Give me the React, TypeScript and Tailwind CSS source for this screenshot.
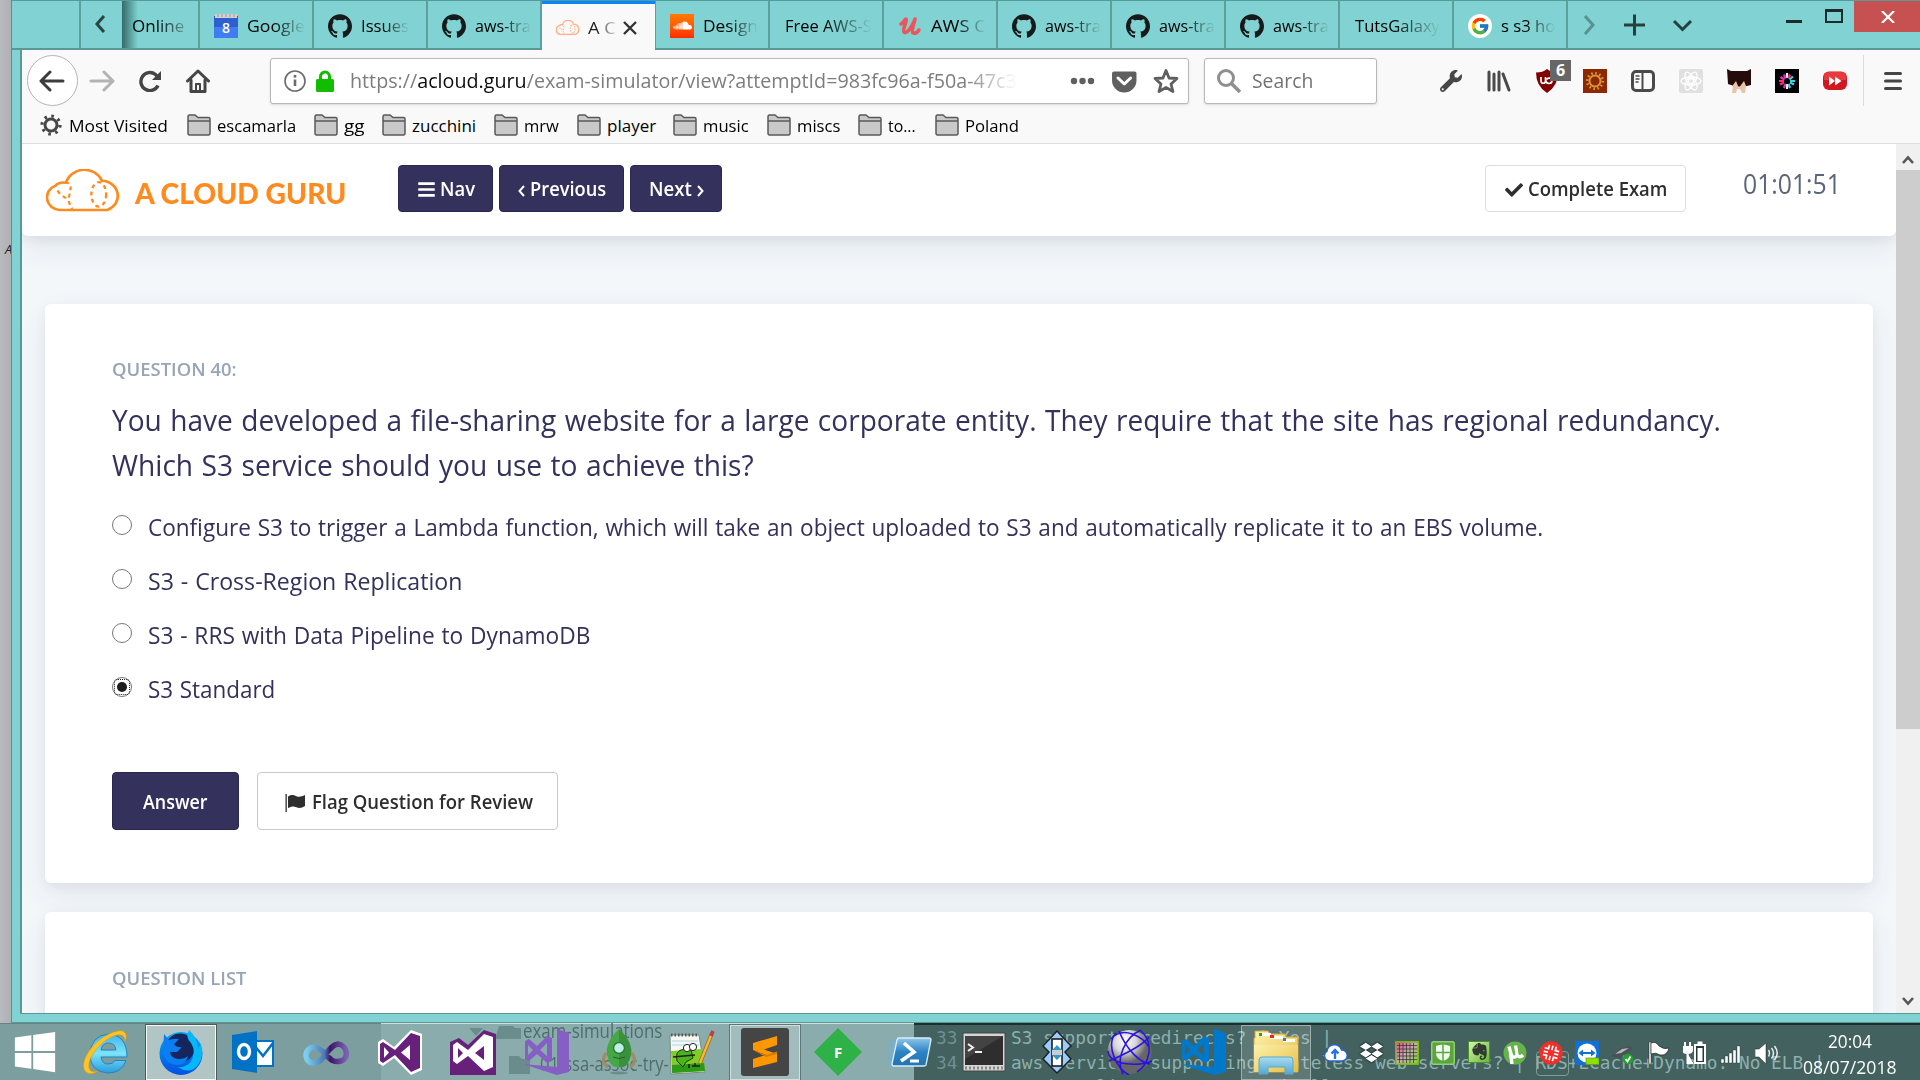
import React, { useLayoutEffect, useRef, useState } from "react";
import { FaBars, FaCheck, FaSoundcloud, FaWindows, FaDropbox, FaWrench } from "react-icons/fa";
import { SiGithub, SiEvernote } from "react-icons/si";
import { FcGoogle } from "react-icons/fc";

type P = { children?: React.ReactNode; className?: string };

/* Single line of text condensed or widened to an exact width. */
function Fit({ w, children, className = "" }: P & { w: number }) {
  const ref = useRef<HTMLSpanElement>(null);
  const [s, setS] = useState(1);
  useLayoutEffect(() => {
    if (ref.current) setS(w / ref.current.offsetWidth);
  }, [w]);
  return (
    <span className={`inline-block shrink-0 whitespace-nowrap ${className}`} style={{ width: w }}>
      <span ref={ref} className="inline-block origin-left" style={{ transform: `scaleX(${s})` }}>
        {children}
      </span>
    </span>
  );
}

function Cloud({ className = "", sw = 2.6 }: { className?: string; sw?: number }) {
  return (
    <svg viewBox="2 0 72 44" preserveAspectRatio="none" className={className} fill="none" stroke="currentColor" strokeWidth={sw}>
      <path d="M15 42 A13 13 0 0 1 11 17 Q14 13 21 14 A18 18 0 0 1 55 12 A15.5 15.5 0 0 1 60 42 Z" />
      <g strokeWidth={sw * 0.85} strokeDasharray="4 3.5">
        <path d="M20 13 C28 16 25 20 24 27 C23 32 24 37 27 41" />
        <path d="M13 22 C17 30 21 27 22 33" />
        <ellipse cx="52" cy="26" rx="7" ry="12.5" />
      </g>
    </svg>
  );
}

const Github = () => <SiGithub className="h-6 w-6 shrink-0 text-[#161a1a]" />;
const Calendar = () => (
  <svg viewBox="0 0 24 24" className="h-6 w-6 shrink-0">
    <rect x="0" y="2" width="24" height="22" fill="#2d5fd0" />
    <path d="M0 13H24V24H0Z" fill="#3f7df0" />
    <rect x="1" y="0" width="22" height="4" fill="#d5d2cd" />
    <path d="M4 0v3M8 0v3M12 0v3M16 0v3M20 0v3" stroke="#999" strokeWidth="1" />
    <text x="12" y="19" textAnchor="middle" fontSize="14" fill="#fff" fontFamily="Open Sans, sans-serif" fontWeight="600">8</text>
  </svg>
);
const Sound = () => (
  <span className="flex h-6 w-6 shrink-0 items-center justify-center bg-gradient-to-b from-[#ff7a00] to-[#ff2a00]">
    <FaSoundcloud className="h-[19px] w-[19px] text-white" />
  </span>
);
const Udemy = () => (
  <svg viewBox="0 0 24 24" className="h-6 w-6 shrink-0" fill="none" stroke="#e9575d" strokeWidth="3.6" strokeLinecap="round" strokeLinejoin="round">
    <path d="M3 10 C6 8 7 5 8 5 C10 6 4 15 6 18 C9 21 15 11 17 5 C16 10 13 17 15 19 C17 20 20 18 21 16" />
  </svg>
);
const Goog = () => (
  <span className="flex h-6 w-6 shrink-0 items-center justify-center rounded-full bg-white">
    <FcGoogle className="h-5 w-5" />
  </span>
);

const fade = "[mask-image:linear-gradient(to_right,#000_45%,transparent)]";

function Tab({ icon, text, tw }: { icon?: React.ReactNode; text: string; tw: number }) {
  return (
    <div className="flex h-full w-[114px] shrink-0 items-center border-r-2 border-r-[#5da19f] pt-0.5 pl-[14px] text-black">
      {icon}
      <Fit w={tw} className={`${icon ? "ml-[9px]" : "ml-px"} ${fade}`}>{text}</Fit>
    </div>
  );
}

function TabStrip() {
  return (
    <div className="flex h-[50px] w-full shrink-0 border-t border-b-2 border-t-[#549b9a] border-b-[#5a9896] bg-[#80d3d2] text-[17px] leading-6">
      <div className="h-full w-[69px] shrink-0 border-r-2 border-[#5da19f]" />
      <div className="flex h-full w-[41px] shrink-0 items-center justify-center">
        <svg viewBox="0 0 12 18" className="mr-1 mb-0.5 h-[18px] w-3" fill="none" stroke="#274544" strokeWidth="3"><path d="M10 1 3 9l7 8" /></svg>
      </div>
      <div className="flex h-full w-[78px] shrink-0 items-center border-r-2 border-[#5da19f] bg-gradient-to-r from-[#346b6a] to-[#80d3d2] to-[16px] pt-0.5 pl-[10px] text-black">
        <Fit w={52} className="[mask-image:linear-gradient(to_right,#000_45%,#00000040)]">Online</Fit>
      </div>
      <Tab icon={<Calendar />} text="Google" tw={58} />
      <Tab icon={<Github />} text="Issues" tw={48} />
      <Tab icon={<Github />} text="aws-tra" tw={56} />
      <div className="-mb-0.5 flex h-[50px] w-[113px] shrink-0 items-center border-t-[3px] border-[#0a84ff] bg-[#f9f9fa] pl-[14px]">
        <Cloud className="h-[15px] w-6 text-[#ffb184]" sw={4} />
        <Fit w={28} className="ml-2 text-[#222] [mask-image:linear-gradient(to_right,#000_30%,#00000020)]">A C</Fit>
        <svg viewBox="0 0 14 14" className="ml-[7px] h-[14px] w-[14px]" stroke="#333" strokeWidth="2.4"><path d="M1 1 13 13M13 1 1 13" /></svg>
      </div>
      <div className="h-full w-px shrink-0 bg-[#5da19f]" />
      <Tab icon={<Sound />} text="Design" tw={55} />
      <Tab text="Free AWS-S" tw={87} />
      <Tab icon={<Udemy />} text="AWS C" tw={55} />
      <Tab icon={<Github />} text="aws-tra" tw={56} />
      <Tab icon={<Github />} text="aws-tra" tw={56} />
      <Tab icon={<Github />} text="aws-tra" tw={56} />
      <Tab text="TutsGalaxy" tw={85} />
      <Tab icon={<Goog />} text="s s3 ho" tw={54} />
      <div className="flex h-full flex-1 items-start">
        <svg viewBox="0 0 120 46" className="mt-px ml-[14px] h-[46px] w-[120px]" fill="none" stroke="#24403f" strokeWidth="3">
          <path d="M3 14 11 23 3 32" stroke="#58918f" />
          <path d="M42 23H63M52.500 12.500V33.500" />
          <path d="M92 19 100.500 27.500 109 19" />
        </svg>
        <div className="mt-[19px] ml-[84px] h-[3px] w-4 bg-[#1c2b2b]" />
        <div className="mt-2 ml-[23px] h-[14px] w-[18px] border-2 border-t-[3px] border-[#1c2b2b]" />
        <div className="ml-auto flex h-[31px] w-[66px] items-center justify-center bg-[#c75050] pl-0.5">
          <svg viewBox="0 0 14 12" className="h-3 w-[14px]" stroke="#fff" strokeWidth="2.2"><path d="M1 0 13 12M13 0 1 12" /></svg>
        </div>
      </div>
    </div>
  );
}

function Slot({ children, className = "" }: P) {
  return <div className={`flex w-12 shrink-0 items-center justify-center ${className}`}>{children}</div>;
}

function Toolbar() {
  return (
    <div className="flex h-[61px] w-full shrink-0 items-center pl-[5px]">
      <div className="flex h-[51px] w-[51px] items-center justify-center rounded-full border border-[#b4b4b5] bg-white">
        <svg viewBox="0 0 26 22" className="mr-0.5 h-[22px] w-[26px]" fill="none" stroke="#3c3c3d" strokeWidth="3" strokeLinecap="round" strokeLinejoin="round"><path d="M24 11H2M11 2 2 11l9 9" /></svg>
      </div>
      <Slot><svg viewBox="0 0 26 22" className="h-[22px] w-[26px]" fill="none" stroke="#b3b3b4" strokeWidth="3" strokeLinecap="round" strokeLinejoin="round"><path d="M2 11H24M15 2l9 9-9 9" /></svg></Slot>
      <Slot><svg viewBox="0 0 24 22" className="h-[22px] w-6" fill="none" stroke="#454546" strokeWidth="3.4"><path d="M20 15.500A9 9 0 1 1 17.500 4.500L20 7" /><path d="M23 1V10H14Z" fill="#454546" stroke="none" /></svg></Slot>
      <Slot><svg viewBox="0 0 24 24" className="h-6 w-6" fill="none" stroke="#454546" strokeWidth="3" strokeLinecap="round" strokeLinejoin="round"><path d="M1.500 12 12 2 22.500 12" /><path d="M5 11V22.500H19V11" /><path d="M10 22v-7h4v7" strokeWidth="2" /></svg></Slot>
      <div className="ml-12 flex h-[46px] w-[919px] shrink-0 items-center rounded-[3px] border border-[#b8b8b9] bg-white pl-[13px] text-[20px] shadow-sm">
        <svg viewBox="0 0 22 22" className="h-[22px] w-[22px]" fill="none" stroke="#6b6b6c" strokeWidth="1.600"><circle cx="11" cy="11" r="10" /><path d="M11 9.500V16" strokeWidth="2.600" /><path d="M11 5V7.600" strokeWidth="2.600" /></svg>
        <svg viewBox="0 0 18 22" className="ml-[10px] h-[22px] w-[18px]" fill="#12bc00"><rect y="9" width="18" height="13" rx="1.500" /><path d="M4.500 10V6.500a4.500 4.500 0 0 1 9 0V10" fill="none" stroke="#12bc00" strokeWidth="3" /></svg>
        <Fit w={667} className="ml-4 text-[#7d7d7e] [mask-image:linear-gradient(to_right,#000_92%,transparent)]">
          https://<span className="text-[#0c0c0d]">acloud.guru</span>/exam-simulator/view?attemptId=983fc96a-f50a-47c3
        </Fit>
        <svg viewBox="0 0 110 28" className="ml-[53px] h-7 w-[110px] overflow-visible" fill="#5f5f60">
          <circle cx="4" cy="14" r="3.200" /><circle cx="12.500" cy="14" r="3.200" /><circle cx="21" cy="14" r="3.200" />
          <path d="M43 3.500H65Q67 3.500 67 5.500V12.500A13 12 0 0 1 41 12.500V5.500Q41 3.500 43 3.500Z" transform="translate(3.500 1) scale(.94 1)" />
          <path d="M48 11 54.300 17 60.600 11" fill="none" stroke="#fff" strokeWidth="3" strokeLinecap="round" strokeLinejoin="round" />
          <path d="M96 3.500 99 11 107 11.500 101 17 103 24.500 96 20.500 89 24.500 91 17 85 11.500 93 11Z" fill="none" stroke="#5f5f60" strokeWidth="2.800" strokeLinejoin="round" />
        </svg>
      </div>
      <div className="ml-[15px] flex h-[46px] w-[173px] shrink-0 items-center rounded-[3px] border border-[#b8b8b9] bg-white pl-3 text-[20px] text-[#737374] shadow-sm">
        <svg viewBox="0 0 24 24" className="h-6 w-6" fill="none" stroke="#8f8f90" strokeWidth="3"><circle cx="9" cy="9" r="7.500" /><path d="M14.500 14.500 23 23" strokeWidth="3.600" /></svg>
        <Fit w={61} className="ml-[11px]">Search</Fit>
      </div>
      <div className="ml-[50px] flex items-center">
        <Slot><FaWrench className="h-[22px] w-[22px] text-[#474748]" /></Slot>
        <Slot><svg viewBox="0 0 24 22" className="h-[22px] w-6" stroke="#4a4a4b" strokeWidth="3" strokeLinecap="round"><path d="M2 2V20M7 4V20M12 2V20M16 4 22 20" /></svg></Slot>
        <Slot className="relative">
          <svg viewBox="0 0 22 24" className="h-6 w-[22px]"><path d="M11 0Q15 3.500 22 3.500 22 17 11 24 0 17 0 3.500 7 3.500 11 0Z" fill="#800000" /><path d="M5 8v4a2.200 2.200 0 0 0 4.500 0V8M10 11.500a3 3 0 1 0 6 0 3 3 0 0 0-5.500-1" fill="none" stroke="#fff" strokeWidth="1.700" /></svg>
          <span className="absolute top-[-9px] left-[27px] flex h-[21px] w-[21px] items-center justify-center bg-[#666] text-[16px] font-bold text-white">6</span>
        </Slot>
        <Slot><svg viewBox="0 0 24 24" className="h-6 w-6"><rect width="24" height="24" fill="#8e2800" /><circle cx="12" cy="12" r="5.500" fill="none" stroke="#d6973a" strokeWidth="2" /><circle cx="12" cy="12" r="7.800" fill="none" stroke="#d6973a" strokeWidth="2.600" strokeDasharray="1.600 2.484" /></svg></Slot>
        <Slot><svg viewBox="0 0 24 22" className="h-[22px] w-6" fill="none" stroke="#4a4a4b" strokeWidth="3"><rect x="1.500" y="1.500" width="21" height="19" rx="3.500" /><path d="M11.500 1V21" strokeWidth="2" /><path d="M4.500 6h4M4.500 9h4M4.500 12h3" strokeWidth="1.500" /></svg></Slot>
        <Slot><svg viewBox="0 0 24 24" className="h-6 w-6" fill="none" stroke="#fff" strokeWidth="1.300"><rect width="24" height="24" rx="2" fill="#e0e0e0" stroke="none" /><ellipse cx="12" cy="12" rx="10" ry="4" /><ellipse cx="12" cy="12" rx="10" ry="4" transform="rotate(60 12 12)" /><ellipse cx="12" cy="12" rx="10" ry="4" transform="rotate(120 12 12)" /><circle cx="12" cy="12" r="2.500" /></svg></Slot>
        <Slot><svg viewBox="0 0 24 24" className="h-6 w-6"><path d="M0 0 4 2H20L24 0V16Q12 20 1 15Z" fill="#250b0a" /><path d="M5 24 6 16 9 12 11 17 12 19 14 16 17 12 19 17 18 24H15L13 20H10L9 24Z" fill="#e9c4a8" /></svg></Slot>
        <Slot><svg viewBox="0 0 24 24" className="h-6 w-6" strokeWidth="2.200"><rect width="24" height="24" /><path d="M12 4v5M12 15v5" stroke="#fff" /><path d="M15 5.500 13.500 9.500M4 12h5M5 15.500 9 13.500" stroke="#ff2d7d" /><path d="M18 7.500 14.500 10.500M15 12h5M19 15.500 15 13.500M15 19 13.500 15" stroke="#39d8e8" /><path d="M9 5.500 10.500 9.500M5.500 8 9.500 10.500M9 19 10.500 15" stroke="#e034c0" /></svg></Slot>
        <Slot><svg viewBox="0 0 24 20" className="h-5 w-6"><rect y=".5" width="24" height="18.500" rx="6" fill="#cf1820" /><path d="M1 9V6Q1 1 6 1H18Q23 1 23 6V9Z" fill="#e63a3c" /><path d="M6 5.500 12 10 6 14.500ZM12 5.500 18.500 10 12 14.500Z" fill="#fff" /></svg></Slot>
      </div>
      <div className="ml-1 h-[51px] w-px bg-[#dcdcdd]" />
      <svg viewBox="0 0 18 18" className="ml-5 h-[18px] w-[18px]" stroke="#454546" strokeWidth="3" strokeLinecap="round"><path d="M1.500 1.500h15M1.500 9h15M1.500 16.500h15" /></svg>
    </div>
  );
}

const bookmarks: [string, number, number][] = [
  ["escamarla", 79, 18], ["gg", 20, 18], ["zucchini", 64, 18], ["mrw", 35, 18], ["player", 49, 17],
  ["music", 46, 18], ["miscs", 43, 18], ["to...", 28, 19], ["Poland", 54, 0],
];

function Bookmarks() {
  return (
    <div className="flex h-[33px] w-full shrink-0 items-start border-b border-[#dededf] pl-[18px] text-[17px] leading-[30px] text-black">
      <svg viewBox="0 0 22 22" className="mt-[3px] h-[22px] w-[22px]" fill="none" stroke="#474748"><circle cx="11" cy="11" r="6" strokeWidth="3" /><circle cx="11" cy="11" r="9" strokeWidth="3.200" strokeDasharray="2.600 4.470" /></svg>
      <Fit w={99} className="mr-[19px] ml-[7px]">Most Visited</Fit>
      {bookmarks.map(([name, w, gap]) => (
        <div key={name} className="flex" style={{ marginRight: gap }}>
          <svg viewBox="0 0 24 22" className="mt-[3px] h-[22px] w-6" fill="#c9c9ca" stroke="#59595a" strokeWidth="1.500"><path d="M1 19V2.500Q1 1 2.500 1H8L11 3.500H21.500Q23 3.500 23 5V19Q23 21 21.500 21H2.500Q1 21 1 19Z" /><path d="M1 7H23" /></svg>
          <Fit w={w} className="ml-1.5">{name}</Fit>
        </div>
      ))}
    </div>
  );
}

const navBtn = "flex h-[47px] shrink-0 items-center justify-center rounded-[4px] border border-[#29274f] bg-[#34315c] pt-0.5 font-semibold text-white";

function ExamHeader() {
  return (
    <div className="relative z-10 flex h-[92px] w-full shrink-0 items-start rounded-b-md bg-white pt-[21px] pl-6 text-[19px] shadow-[0_12px_30px_rgba(50,60,93,0.08),0_4px_12px_rgba(0,0,0,0.06)]">
      <Cloud className="mt-1 h-[43px] w-[76px] text-[#ff8a1e]" />
      <Fit w={211} className="mt-2 ml-[13px] font-[Lato] text-[28px] leading-10 font-black text-[#ff8a1e]">A CLOUD GURU</Fit>
      <div className={`${navBtn} ml-[52px] w-[95px] gap-1`}><FaBars className="h-[19px] w-[19px]" /><Fit w={35}>Nav</Fit></div>
      <div className={`${navBtn} ml-1.5 w-[125px] gap-[5px]`}>
        <svg viewBox="0 0 7 12" className="mt-0.5 h-3 w-[7px]" fill="none" stroke="#fff" strokeWidth="2"><path d="M6 1 1.500 6 6 11" /></svg>
        <Fit w={76}>Previous</Fit>
      </div>
      <div className={`${navBtn} ml-1.5 w-[92px] gap-[5px]`}>
        <Fit w={43}>Next</Fit>
        <svg viewBox="0 0 7 12" className="mt-0.5 h-3 w-[7px]" fill="none" stroke="#fff" strokeWidth="2"><path d="M1 1 5.500 6 1 11" /></svg>
      </div>
      <div className="ml-[763px] flex h-[47px] w-[201px] items-center justify-center gap-[5px] rounded-[4px] border border-[#dedee0] pt-0.5 pl-px font-semibold text-[#2e2e2e]">
        <FaCheck className="h-[18px] w-[18px]" /><Fit w={139}>Complete Exam</Fit>
      </div>
      <Fit w={98} className="-mt-px ml-[57px] text-[27px] leading-10 text-[#5b6579]">01:01:51</Fit>
    </div>
  );
}

const options: [string, number][] = [
  ["Configure S3 to trigger a Lambda function, which will take an object uploaded to S3 and automatically replicate it to an EBS volume.", 1395],
  ["S3 - Cross-Region Replication", 314],
  ["S3 - RRS with Data Pipeline to DynamoDB", 442],
  ["S3 Standard", 127],
];
const cardShadow = "shadow-[0_12px_30px_rgba(50,60,93,0.08),0_4px_12px_rgba(0,0,0,0.05)]";

function Exam() {
  return (
    <div className="flex min-h-0 flex-1 flex-col overflow-hidden bg-[#f3f7fa] text-[#34315c]">
      <ExamHeader />
      <div className={`mt-[68px] ml-[23px] flex h-[579px] w-[1828px] shrink-0 flex-col rounded-md bg-white pt-[52px] pl-[67px] ${cardShadow}`}>
        <Fit w={125} className="h-[27px] text-[18px] leading-[27px] font-semibold text-[#98a5b5]">QUESTION 40:</Fit>
        <div className="mt-[14px] flex flex-col text-[30px] leading-[45px] [word-spacing:0.04em]">
          <Fit w={1609}>You have developed a file-sharing website for a large corporate entity. They require that the site has regional redundancy.</Fit>
          <Fit w={642}>Which S3 service should you use to achieve this?</Fit>
        </div>
        <div className="mt-[13px] flex flex-col text-[24px] [word-spacing:0.04em]">
          {options.map(([t, w], i) => (
            <div key={t} className="flex h-[54px] items-center">
              <span className="mb-1 flex h-5 w-5 items-center justify-center rounded-full border border-[#77777a] bg-white">
                {i === 3 && <span className="flex h-4 w-4 items-center justify-center rounded-[4px] border border-dotted border-[#222]"><span className="h-2.5 w-2.5 rounded-full bg-[#1d1d1d]" /></span>}
              </span>
              <Fit w={w} className="ml-4">{t}</Fit>
            </div>
          ))}
        </div>
        <div className="mt-[56px] flex text-[19px] font-semibold">
          <div className="flex h-[58px] w-[127px] items-center justify-center rounded-[4px] border border-[#29274f] bg-[#34315c] pt-[3px] text-white"><Fit w={65}>Answer</Fit></div>
          <div className="ml-[18px] flex h-[58px] w-[301px] items-center rounded-[4px] border border-[#c9c9cc] pt-[3px] pl-[27px] text-[#2e2e2e]">
            <svg viewBox="0 0 20 18" className="h-[18px] w-5" fill="#2e2e2e"><path d="M.500 0H1.800V18H.500Z" /><path d="M3 2.500C7 0 9 1 11.500 2.200 14 3.400 17 2.500 20 1V12C17 14 14 14.500 11.500 13.200 9 12 6.500 12 3 14Z" /></svg>
            <Fit w={221} className="ml-[7px]">Flag Question for Review</Fit>
          </div>
        </div>
      </div>
      <div className={`mt-[29px] ml-[23px] flex h-[200px] w-[1828px] shrink-0 rounded-md bg-white pt-[53px] pl-[67px] ${cardShadow}`}>
        <Fit w={134} className="text-[18px] leading-[27px] font-semibold text-[#98a5b5]">QUESTION LIST</Fit>
      </div>
    </div>
  );
}

function Scrollbar() {
  return (
    <div className="flex w-6 shrink-0 flex-col bg-[#f0f0f0]">
      <div className="flex h-[26px] items-center justify-center"><svg viewBox="0 0 12 9" className="mt-1 h-[9px] w-3" fill="none" stroke="#555" strokeWidth="2.600"><path d="M1 8 6 2.500 11 8" /></svg></div>
      <div className="h-[559px] bg-[#cdcdcd]" />
      <div className="flex-1" />
      <div className="flex h-6 items-center justify-center"><svg viewBox="0 0 12 9" className="h-[9px] w-3" fill="none" stroke="#555" strokeWidth="2.600"><path d="M1 1 6 6.500 11 1" /></svg></div>
    </div>
  );
}

const S = ({ children, className = "h-[46px] w-[46px]" }: P) => <svg viewBox="0 0 46 46" className={className}>{children}</svg>;

const apps: { on?: string; el: React.ReactNode }[] = [
  { el: <S className="mr-[5px] h-[46px] w-[46px]"><defs><linearGradient id="ie" x2="0" y2="1"><stop stopColor="#43b4e8" /><stop offset=".5" stopColor="#7be3fa" /><stop offset="1" stopColor="#2c9bdc" /></linearGradient></defs><path fillRule="evenodd" d="M45 28H19Q20 35 26 35 31 35 33 31.500H44Q40 44 26 44 8 43 8 25 9 7 26 5 45 6 45 28ZM19 21H34Q33 14 26.500 14 20 14 19 21Z" fill="url(#ie)" stroke="#2383c4" /><path d="M4 43C-5 35 12 7 36 2c7-1 10 3 7 11 0-5-2-8-8-7C20 9 2 32 8 41q2 3 8 1-7 5-12 1Z" fill="#fcc526" stroke="#e09a10" strokeWidth=".6" /></S> },
  { on: "border-white/90 bg-white/40 outline outline-[#4d5a5a]", el: <S><defs><linearGradient id="ff" x2="0" y2="1"><stop stopColor="#00a8f8" /><stop offset="1" stopColor="#0550e0" /></linearGradient></defs><circle cx="23" cy="24.500" r="21.500" fill="url(#ff)" /><circle cx="22" cy="19" r="14.500" fill="#15265e" /><path d="M6 5 11 11Q17 9 21 10L16 15Q19 19 24 18L19 23H12Q13 30 21 30 27 30 30 27 28 36 19 36 8 35 5 24Z" fill="#0b7ff2" /><path d="M31 1Q27 9 33 14 39 23 32 34 26 39 20 38 32 46 40 36 46 28 43 14 41 18 40 19 39 8 31 1Z" fill="#05b8f8" /></S> },
  { el: <S className="mr-px h-[46px] w-[46px]"><path d="M24 12H43V37H24Z" fill="#fff" stroke="#0072c6" strokeWidth="2" /><path d="M24 16 33 27 43 14" fill="none" stroke="#0072c6" strokeWidth="2.500" /><path d="M2 6 27 2V44L2 40Z" fill="#0072c6" /><ellipse cx="14" cy="22.500" rx="5.500" ry="7" fill="none" stroke="#fff" strokeWidth="3.400" /></S> },
  { el: <S className="mr-0.5 h-[46px] w-[46px]"><defs><linearGradient id="inf"><stop stopColor="#7cd0ee" /><stop offset=".45" stopColor="#4c7bb5" /><stop offset=".6" stopColor="#3d1467" /><stop offset="1" stopColor="#7b62b4" /></linearGradient></defs><path d="M23 26C16 18 10 17 6 20 0 26 4 35 12 34 21 33 25 16 35 15 45 16 46 30 38 32 31 34 28 31 23 26Z" fill="none" stroke="url(#inf)" strokeWidth="5.500" /></S> },
  { el: <S><path d="M34 1 45 5V41L34 46 17 29 6 37 1 34V13L6 10 17 18Z" fill="#fff" /><path d="M34 4 43 7V39L34 43 18 26 6 34 3 32V15L6 13 18 21Z" fill="#68217a" /><path d="M7 18 12 23.500 7 29ZM33 16V31L24 23.500Z" fill="#fff" /></S> },
  { el: <S><path d="M0 13 9 9 18 16 34 1 46 5V46H0Z" fill="#68217a" /><path d="M34 5 43 8V38L34 42 18 27 7 35 3 32V16L7 13 18 21Z" fill="#fff" /><path d="M8 19 13 24 8 29ZM34 17V31L25 24Z" fill="#68217a" /></S> },
  { el: <S><path d="M34 0 46 4V43L34 46 0 35 34 38Z" fill="#865fc5" /><path fillRule="evenodd" d="M2 12 6 10 14 17 24 7 29 9V32L24 34 14 25 6 32 2 30ZM5 16V26L10 21ZM24 14V27L17 21Z" fill="#865fc5" /></S> },
  { el: <S><ellipse cx="23" cy="44" rx="9" ry="1.500" fill="#557a70" opacity=".6" /><path d="M10 24Q4 33 12 38M36 24Q42 33 34 38" fill="none" stroke="#a58a5c" strokeWidth="3" /><path d="M23 0Q37 13 35 26 32 37 27 38H19Q14 37 11 26 9 13 23 0Z" fill="#45a845" /><path d="M23 0Q37 13 35 26 32 37 27 38H23Z" fill="#38923c" /><circle cx="23" cy="19" r="5.500" fill="#bfeee7" stroke="#2e7b3c" strokeWidth="1.500" /><path d="M17 28q6 3 12 0" stroke="#255f2c" fill="none" /></S> },
  { el: <S><path d="M1 6H30L36 43 2 45Z" fill="#f4f8f4" stroke="#7a8a80" /><path d="M2 22 33 20 36 42 3 44Z" fill="#82cc28" /><path d="M3 36 35 34 36 42 3 44Z" fill="#2e9b17" /><path d="M2 6H30" stroke="#555" strokeWidth="3" strokeDasharray="1.500 2" /><path d="M3 12h26M3 16h27" stroke="#b4d4e6" /><path d="M8 32q-2-9 4-11 6-3 10 0l2 8-7 4-3 5Z" fill="#4bb31c" stroke="#173c10" /><circle cx="18" cy="19" r="3.600" fill="#fff" stroke="#222" /><circle cx="24" cy="18" r="3.600" fill="#fff" stroke="#222" /><path d="M4 28 26 26M20 35v4M26 34v3M23 37h8" stroke="#222" strokeWidth="1.500" /><path d="M31 34 43 4" stroke="#9a6414" strokeWidth="3.800" /><path d="M31 34 43 4" stroke="#f9b934" strokeWidth="2.400" /><path d="M42 7 44 2" stroke="#b94242" strokeWidth="3.500" /></S> },
  { on: "border-white/50 bg-white/20 outline outline-[#5f7777]", el: <svg viewBox="0 0 48 48" className="h-12 w-12"><rect width="48" height="48" rx="3" fill="#454545" /><path d="M36 8V17L23 21.500 36 26V34L12 40V31L25 27 12 22V15Z" fill="#ff9800" /><path d="M12 22 25 27 36 23.500V26L25 29Z" fill="#d97d00" /></svg> },
  { el: <svg viewBox="0 0 48 48" className="h-12 w-12"><path d="M24 0 48 24 24 48 0 24Z" fill="#2eb146" /><text x="24" y="29.500" textAnchor="middle" fontSize="15" fontWeight="700" fill="#fff" fontFamily="Open Sans, sans-serif">F</text></svg> },
  { el: <S><defs><linearGradient id="ps" x2="0" y2="1"><stop stopColor="#8ec6ea" /><stop offset=".5" stopColor="#2b83c4" /><stop offset="1" stopColor="#2173b5" /></linearGradient></defs><path d="M1 10H10L5 37H0Z" fill="#6bb2df" opacity=".5" /><path d="M11 9H41Q43 9 43 11L38 36Q37.500 37 36 37H6Q4 37 4 35L9 11Q9.500 9 11 9Z" fill="url(#ps)" stroke="#d8eefa" strokeWidth="1.300" /><path d="M16 14 26 23 13 32" fill="none" stroke="#fff" strokeWidth="3.600" /><path d="M22 32h9" stroke="#fff" strokeWidth="3" /></S> },
  { el: <S><path d="M2 4H44V42H2Z" fill="#d5d5d5" stroke="#444" /><path d="M4 7H42V36H4Z" fill="#2e2e2e" /><path d="M4 7H42L4 30Z" fill="#434343" /><path d="M4 39H42" stroke="#888" strokeWidth="3" strokeDasharray="2 2" /><path d="M7 15 12 18.500 7 22M14 23h7" fill="none" stroke="#f2f2f2" strokeWidth="2" /></S> },
  { el: <S><path d="M23 2 37 17 31 23 37 30 23 44 9 30 15 23 9 17Z" fill="#99ccff" stroke="#222" strokeWidth="1.500" /><path d="M18 10H28V37H18Z" fill="#fff" stroke="#111" strokeWidth="1.500" /><path d="M18 21 23 16 28 21ZM18 26H28L23 31Z" fill="#3399cc" /><path d="M18 21H28V26H18Z" fill="#ccc" /></S> },
  { el: <S><defs><radialGradient id="sp" cx=".4" cy=".25"><stop stopColor="#fff" /><stop offset=".5" stopColor="#d6d6d6" /><stop offset="1" stopColor="#666" /></radialGradient></defs><circle cx="22.500" cy="23" r="22" fill="url(#sp)" /><g fill="none" stroke="#2a12e0" strokeWidth="1.600"><path d="M1 22C2 36 30 38 45 32M2 32C16 26 36 16 42 8M4 10C16-4 36 8 42 18M12 2C20 22 34 34 43 35M34 1C18 8 8 30 16 45M9 4C-2 16 10 40 22 46M34 2C48 14 42 36 30 43" /></g></S> },
  { el: <S className="ml-px h-[46px] w-[46px]"><path d="M34 0 46 4V43L34 46 0 35 34 38Z" fill="#0079cc" /><path fillRule="evenodd" d="M2 12 6 10 14 17 24 7 29 9V32L24 34 14 25 6 32 2 30ZM5 16V26L10 21ZM24 14V27L17 21Z" fill="#0079cc" /></S> },
  { on: "border-white/40 bg-white/15", el: <svg viewBox="0 0 48 46" className="h-[46px] w-12"><defs><linearGradient id="ex" x2="1" y2="1"><stop stopColor="#fdf2ac" /><stop offset="1" stopColor="#e6bd45" /></linearGradient><linearGradient id="eb" x2="0" y2="1"><stop stopColor="#a9dcec" /><stop offset="1" stopColor="#52a8d8" /></linearGradient></defs><path d="M3 9V2H16L18 5H33L34 8H46V43H2V9Z" fill="url(#ex)" stroke="#cfa53c" /><path d="M7 4h12v3H7ZM18 7h13v3H18ZM31 10h12v3H31Z" fill="#fff" /><path d="M7 4h3v3H7Z" fill="#2f9b39" /><path d="M18 6h4v3h-4Z" fill="#d9301e" /><path d="M31 9h3v3h-3Z" fill="#2b83c4" /><path d="M2 16H46V43H2Z" fill="url(#ex)" /><path d="M7 45V31Q7 28 10 28H38Q41 28 41 31V45H33V38H16V45Z" fill="url(#eb)" stroke="#5fa9c9" /></svg> },
];

const T = ({ children }: P) => <svg viewBox="0 0 24 24" className="h-6 w-6">{children}</svg>;
const tray: React.ReactNode[] = [
  <T><path d="M6 20A5.500 5.500 0 0 1 4 10 7.500 7.500 0 0 1 18.500 9 5.500 5.500 0 0 1 19 20Z" fill="#fff" stroke="#2b62c9" strokeWidth="1.500" /><path d="M12 18V10M8.500 12.500 12 9l3.500 3.500" fill="none" stroke="#2472e8" strokeWidth="2.400" /></T>,
  <FaDropbox className="h-[23px] w-[23px] text-white drop-shadow-[0_0_1px_#000]" />,
  <T><defs><linearGradient id="gr" x2="1" y2="1"><stop stopColor="#e04b8c" /><stop offset=".5" stopColor="#c8aaab" /><stop offset="1" stopColor="#7cd03c" /></linearGradient></defs><rect x=".7" y=".7" width="22.600" height="22.600" fill="url(#gr)" stroke="#76b900" strokeWidth="1.500" /><path d="M4.500 2v20M8 2v20M11.500 2v20M15 2v20M18.500 2v20M2 4.500h20M2 8h20M2 11.500h20M2 15h20M2 18.500h20" stroke="#28302a" strokeWidth=".7" /></T>,
  <T><rect x=".7" y=".7" width="22.600" height="22.600" rx="2" fill="#5aa63c" stroke="#92cf74" strokeWidth="1.500" /><path d="M5 5Q12 2 19 5V12Q19 18 12 20 5 18 5 12Z" fill="#f0faec" /><path d="M12 3V20M5 11.500H19" stroke="#5aa63c" strokeWidth="1.500" /></T>,
  <span className="flex h-[22px] w-[22px] items-center justify-center border border-[#4d9426] bg-gradient-to-br from-[#d4f2ae] to-[#68b92e]"><SiEvernote className="h-[17px] w-[17px] text-[#303c30]" /></span>,
  <T><circle cx="12" cy="12" r="11.500" fill="#66b34a" /><path d="M6 5.500 8 13Q10 18 13.500 15 14.500 14 12.500 4.500M13.500 13Q16 18 20 14" fill="none" stroke="#fff" strokeWidth="3.400" /><path d="M7.500 12 9 23" stroke="#fff" strokeWidth="3.400" /></T>,
  <T><circle cx="12" cy="12" r="11.700" fill="#ee2f2a" /><path d="M12 4.500V9M12 15V19.500M4.500 12H9M15 12H19.500M8.500 4.500V8.500H4.500M15.500 4.500V8.500H19.500M8.500 19.500V15.500H4.500M15.500 19.500V15.500H19.500" fill="none" stroke="#fff" strokeWidth="1.700" transform="rotate(15 12 12)" /></T>,
  <T><rect width="24" height="24" fill="#0e70d8" /><circle cx="12" cy="12" r="9.500" fill="#fff" /><path d="M3.500 12 8 8.500V11H16V8.500L20.500 12 16 15.500V13H8V15.500Z" fill="#0e70d8" /><rect x="11" y="17" width="13" height="6.500" fill="#8fe000" stroke="#6a9c10" strokeWidth=".7" /></T>,
  <T><path d="M0 15 10 7 20 5 21 8 9 17Z" fill="#4b5255" /><path d="M4 13 11 8 18 7 10 12Z" fill="#b4babc" /><circle cx="17" cy="18" r="5.300" fill="#24a02c" /><path d="M14.500 18 16.500 20.500 19.500 15.500" fill="none" stroke="#fff" strokeWidth="1.800" /></T>,
  <T><path d="M2 1H4V23H2Z" fill="#fff" stroke="#222" strokeWidth=".5" /><path d="M4 2Q9 0 12 5 17 9 22 7 20 15 13 14 9 11 4 13Z" fill="#fff" stroke="#222" strokeWidth=".7" /></T>,
  <T><path d="M2 1V6M7 1V6M0 6H9V9Q9 12 4.500 12 0 12 0 9ZM4.500 12V22H10" fill="#fff" stroke="#fff" strokeWidth="2" /><rect x="12" y="4" width="10" height="18" fill="#263a3a" stroke="#fff" strokeWidth="2" /><path d="M14.500 2h5" stroke="#fff" strokeWidth="3" /><rect x="14.500" y="7" width="5" height="13" fill="#fff" /></T>,
  <T><path d="M2 18h3v4H2ZM6 15h3v7H6ZM10 12h3v10h-3ZM14 9h3v13h-3ZM18 5h3v17h-3Z" fill="#fff" stroke="#263a3a" strokeWidth=".4" /></T>,
  <T><path d="M0 8H4L11 2V23L4 16H0Z" fill="#fff" stroke="#222" strokeWidth=".5" /><path d="M13.500 9q2 3 0 6.500M16.500 7q4 5 0 10.500M19.500 5q5.500 7 0 14" fill="none" stroke="#e8eeee" strokeWidth="1.500" /></T>,
];

function Taskbar() {
  return (
    <div className="relative h-[57px] w-full shrink-0 overflow-hidden">
      <div className="absolute inset-0 flex">
        <div className="w-[381px] border-t border-[#648585] bg-[#7d9e9e]" />
        <div className="relative w-[533px] border-t border-[#d5dede] bg-[#8bacad] text-[20px] leading-6 text-[#4e6d6c]">
          <svg viewBox="0 0 160 56" className="absolute top-0 left-[88px] h-14 w-[160px]" fill="#6b8c8c"><path d="M0 4H14L7 12ZM30 2H44L46 4H52V15H26Z" /><path d="M40 32H50L53 35H61V50H40Z" /></svg>
          <div className="absolute top-[-5px] left-[142px]"><Fit w={139}>exam-simulations</Fit></div>
          <div className="absolute top-7 left-[159px]"><Fit w={129}>01-ssa-assoc-try-</Fit></div>
        </div>
        <div className="relative flex-1 border-t-2 border-[#1f2f2f] bg-[#42615f] font-['DejaVu_Sans_Mono'] text-[17.800px] leading-[24.500px] whitespace-pre text-[#8db0ad]">
          <div className="absolute top-px left-[22px] text-[#6f9190]">{"33\n34\n35"}</div>
          <div className="absolute top-px left-[97px]">{"S3 supports redirects? | Yes |\naws services supporting stateless web servers? | RDS+ECache+Dynamo. No ELB |\nRead Replica must automatically"}</div>
          <div className="absolute top-[26px] left-[622px] h-[25px] w-[33px] rounded border border-[#7c9e9b]" />
        </div>
      </div>
      <div className="relative flex h-full items-center">
        <div className="flex w-[71px] shrink-0 justify-center"><FaWindows className="mr-px h-[46px] w-[46px] text-white" /></div>
        {apps.map((a, i) => (
          <div key={i} className="flex w-[73px] shrink-0 items-center justify-center pt-px">
            {a.on ? <div className={`flex h-[55px] w-[70px] items-center justify-center border ${a.on}`}>{a.el}</div> : a.el}
          </div>
        ))}
        <div className="ml-[5px] flex pt-0.5">
          {tray.map((t, i) => <div key={i} className="flex w-9 shrink-0 justify-center">{t}</div>)}
        </div>
        <div className="ml-[18px] flex w-[94px] flex-col items-center pt-1 text-[18px] leading-[26px] text-white">
          <Fit w={44}>20:04</Fit>
          <Fit w={94}>08/07/2018</Fit>
        </div>
      </div>
    </div>
  );
}

export default function App() {
  return (
    <div className="flex h-[1080px] w-[1920px] flex-col overflow-hidden bg-[#b4b5b9] font-['Open_Sans','Noto_Sans',sans-serif]">
      <div className="flex min-h-0 flex-1">
        <div className="w-[11px] shrink-0 overflow-hidden bg-gradient-to-r from-[#b9babe] to-[#aeb0b4] pt-[240px] pl-[5px] text-[13px] text-[#222] italic">A</div>
        <div className="flex min-w-0 flex-1 flex-col border-l border-[#5f8f8e] bg-[#80d3d2]">
          <TabStrip />
          <div className="ml-2 flex min-h-0 flex-1 flex-col border-b border-l-2 border-[#5a9896]">
            <div className="flex flex-col bg-[#f9f9fa]"><Toolbar /><Bookmarks /></div>
            <div className="flex min-h-0 flex-1 bg-white"><div className="flex w-[1874px] shrink-0"><Exam /></div><Scrollbar /></div>
          </div>
          <div className="h-[9px] shrink-0 border-b border-[#5a9896]" />
        </div>
      </div>
      <Taskbar />
    </div>
  );
}
